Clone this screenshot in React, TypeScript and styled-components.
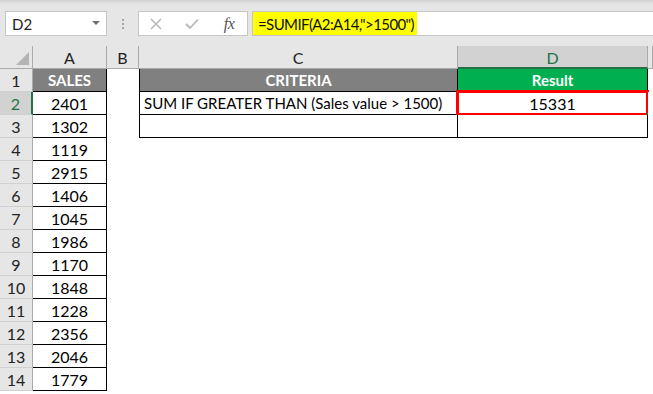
import React from "react";
import styled, { createGlobalStyle, css } from "styled-components";

const Global = createGlobalStyle`
  html, body { margin: 0; padding: 0; background: #ffffff; }
  body { font-family: "Lato", "Liberation Sans", sans-serif; }
  * { box-sizing: border-box; }
`;

const Page = styled.div`
  width: 653px;
  height: 394px;
  overflow: hidden;
  background: #ffffff;
  display: flex;
  flex-direction: column;
`;

const Toolbar = styled.div`
  height: 46px;
  flex: none;
  background: linear-gradient(#cfcfcf 0px, #e2e2e2 3px, #e6e6e6 5px);
  display: flex;
  align-items: flex-start;
  padding: 11px 0 0 5px;
`;

const NameBox = styled.div`
  width: 102px;
  height: 25px;
  background: #fff;
  border: 1px solid #c6c6c6;
  display: flex;
  align-items: center;
  justify-content: space-between;
  padding: 0 6px 0 6px;
  font-size: 15px;
  color: #222;
`;

const Caret = styled.span`
  width: 0;
  height: 0;
  border-left: 4px solid transparent;
  border-right: 4px solid transparent;
  border-top: 4px solid #707070;
  margin-top: -2px;
`;

const Grip = styled.div`
  width: 31px;
  height: 25px;
  display: flex;
  flex-direction: column;
  align-items: center;
  justify-content: center;
  gap: 2px;
  span {
    width: 2px;
    height: 2px;
    background: #a8a8a8;
  }
`;

const IconBox = styled.div`
  width: 110px;
  height: 25px;
  background: #fff;
  border: 1px solid #c6c6c6;
  display: flex;
  align-items: center;
  padding-left: 5px;
`;

const IconSlot = styled.div<{ $w: number }>`
  width: ${(p) => p.$w}px;
  height: 23px;
  display: flex;
  align-items: center;
  justify-content: center;
`;

const Fx = styled.span`
  font-family: "Liberation Serif", serif;
  font-style: italic;
  font-size: 16px;
  color: #555;
  letter-spacing: -0.5px;
`;

const FormulaBox = styled.div`
  flex: 1;
  height: 25px;
  margin-left: 4px;
  background: #fff;
  border: 1px solid #c6c6c6;
  border-right: none;
  display: flex;
`;

const FormulaText = styled.span`
  background: #ffff00;
  height: 23px;
  display: flex;
  align-items: center;
  padding: 0 3px 0 5px;
  font-size: 15px;
  letter-spacing: -0.6px;
  color: #111;
  white-space: nowrap;
`;

const Grid = styled.div`
  flex: 1;
  display: grid;
  grid-template-columns: 33px 74px 32px 319px 190px 1fr;
  grid-auto-rows: 23px;
`;

const HeaderCell = styled.div<{ $sel?: boolean }>`
  background: ${(p) => (p.$sel ? "#d2d2d2" : "#e6e6e6")};
  border-right: 1px solid #ababab;
  border-bottom: ${(p) => (p.$sel ? "2px solid #217346" : "1px solid #ababab")};
  display: flex;
  align-items: center;
  justify-content: center;
  font-size: 16px;
  color: ${(p) => (p.$sel ? "#217346" : "#222")};
  padding-top: ${(p) => (p.$sel ? "1px" : "0")};
`;

const Corner = styled.div`
  background: #e6e6e6;
  border-right: 1px solid #ababab;
  border-bottom: 1px solid #ababab;
  position: relative;
  &::after {
    content: "";
    position: absolute;
    right: 3px;
    bottom: 3px;
    width: 0;
    height: 0;
    border-left: 13px solid transparent;
    border-bottom: 13px solid #b4b4b4;
  }
`;

const RowHead = styled.div<{ $sel?: boolean }>`
  background: ${(p) => (p.$sel ? "#d2d2d2" : "#e6e6e6")};
  border-bottom: 1px solid #d0d0d0;
  border-right: ${(p) => (p.$sel ? "2px solid #217346" : "1px solid #ababab")};
  display: flex;
  align-items: center;
  justify-content: center;
  font-size: 16px;
  color: ${(p) => (p.$sel ? "#217346" : "#222")};
`;

type Tone = "plain" | "gray" | "green" | "empty";

const Cell = styled.div<{
  $tone: Tone;
  $r?: boolean;
  $b?: boolean;
  $l?: boolean;
  $align?: "left" | "center";
  $num?: boolean;
}>`
  position: relative;
  display: flex;
  align-items: center;
  justify-content: ${(p) => (p.$align === "left" ? "flex-start" : "center")};
  padding: ${(p) => (p.$align === "left" ? "0 0 0 4px" : "0")};
  font-size: ${(p) => (p.$num ? "16px" : "15px")};
  white-space: nowrap;
  color: #000;
  background: ${(p) =>
    p.$tone === "gray" ? "#808080" : p.$tone === "green" ? "#00b050" : "#fff"};
  border-right: ${(p) => (p.$r ? "1px solid #000" : "none")};
  border-bottom: ${(p) => (p.$b ? "1px solid #000" : "none")};
  border-left: ${(p) => (p.$l ? "1px solid #000" : "none")};
  ${(p) =>
    (p.$tone === "gray" || p.$tone === "green") &&
    css`
      color: #fff;
      font-weight: 700;
    `}
`;

const Selection = styled.div`
  position: absolute;
  left: -2px;
  top: -2px;
  right: -2px;
  bottom: -2px;
  border: 3px solid #ff0000;
  pointer-events: none;
`;

const Handle = styled.div`
  position: absolute;
  right: -3px;
  bottom: -3px;
  width: 4px;
  height: 4px;
  background: #217346;
`;

const sales = [2401, 1302, 1119, 2915, 1406, 1045, 1986, 1170, 1848, 1228, 2356, 2046, 1779];

export default function App() {
  const rows: React.ReactNode[] = [];
  for (let i = 1; i <= 14; i++) {
    const isSel = i === 2;
    rows.push(<RowHead key={`h${i}`} $sel={isSel}>{i}</RowHead>);
    if (i === 1) {
      rows.push(<Cell key={`a${i}`} $tone="gray" $r $b>SALES</Cell>);
    } else {
      rows.push(
        <Cell key={`a${i}`} $tone="plain" $r $b $num>
          {sales[i - 2]}
        </Cell>
      );
    }
    rows.push(<Cell key={`b${i}`} $tone="empty" />);
    if (i === 1) {
      rows.push(<Cell key={`c${i}`} $tone="gray" $l $r $b>CRITERIA</Cell>);
      rows.push(<Cell key={`d${i}`} $tone="green" $r $b>Result</Cell>);
    } else if (i === 2) {
      rows.push(
        <Cell key={`c${i}`} $tone="plain" $l $r $b $align="left">
          SUM IF GREATER THAN (Sales value &gt; 1500)
        </Cell>
      );
      rows.push(
        <Cell key={`d${i}`} $tone="plain" $r $b $num>
          15331
          <Selection />
          <Handle />
        </Cell>
      );
    } else if (i === 3) {
      rows.push(<Cell key={`c${i}`} $tone="plain" $l $r $b />);
      rows.push(<Cell key={`d${i}`} $tone="plain" $r $b />);
    } else {
      rows.push(<Cell key={`c${i}`} $tone="empty" />);
      rows.push(<Cell key={`d${i}`} $tone="empty" />);
    }
    rows.push(<Cell key={`e${i}`} $tone="empty" />);
  }

  return (
    <Page>
      <Global />
      <Toolbar>
        <NameBox>
          <span>D2</span>
          <Caret />
        </NameBox>
        <Grip>
          <span />
          <span />
          <span />
        </Grip>
        <IconBox>
          <IconSlot $w={24}>
            <svg width="12" height="12" viewBox="0 0 12 12">
              <path d="M1 1 L11 11 M11 1 L1 11" stroke="#b8b8b8" strokeWidth="1.5" />
            </svg>
          </IconSlot>
          <IconSlot $w={48}>
            <svg width="14" height="12" viewBox="0 0 14 12">
              <path d="M1 6 L5 10 L13 1.5" stroke="#b8b8b8" strokeWidth="1.8" fill="none" />
            </svg>
          </IconSlot>
          <IconSlot $w={26}>
            <Fx>fx</Fx>
          </IconSlot>
        </IconBox>
        <FormulaBox>
          <FormulaText>=SUMIF(A2:A14,"&gt;1500")</FormulaText>
        </FormulaBox>
      </Toolbar>
      <Grid>
        <Corner />
        <HeaderCell>A</HeaderCell>
        <HeaderCell>B</HeaderCell>
        <HeaderCell>C</HeaderCell>
        <HeaderCell $sel>D</HeaderCell>
        <HeaderCell />
        {rows}
      </Grid>
    </Page>
  );
}
